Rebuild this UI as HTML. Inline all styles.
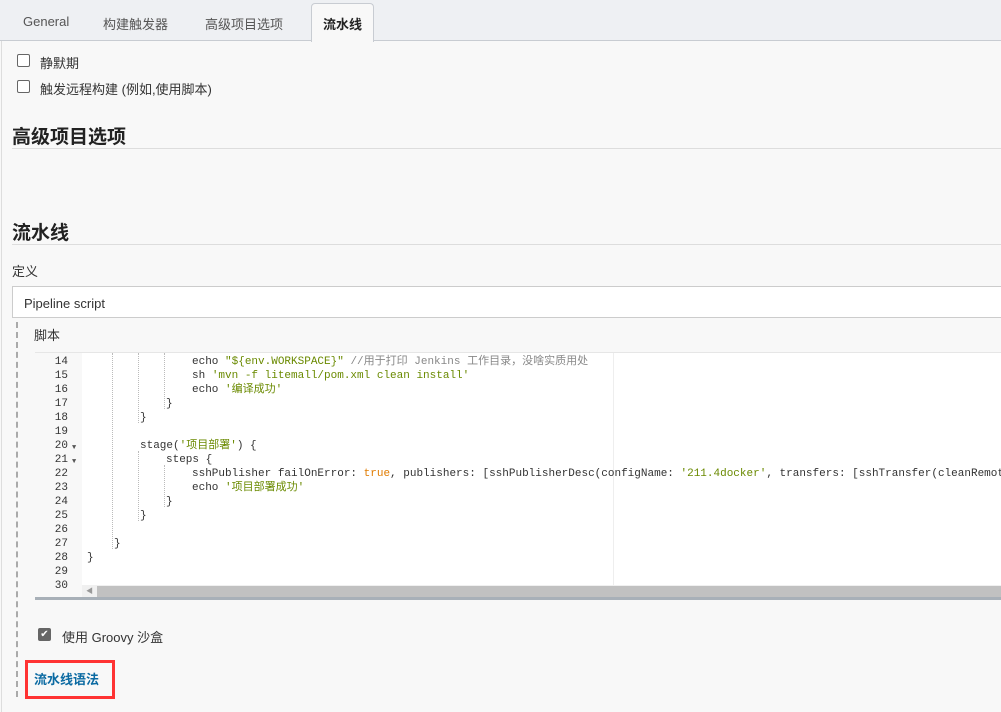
<!DOCTYPE html>
<html><head><meta charset="utf-8"><style>
*{margin:0;padding:0;box-sizing:border-box}
body{width:1001px;height:712px;overflow:hidden;background:#f8f8f8;font-family:"Liberation Sans","Noto Sans CJK SC",sans-serif;color:#333;position:relative;font-size:13px}
.abs{position:absolute;white-space:nowrap}
.tabs{position:absolute;left:0;top:0;width:1001px;height:41px;background:#eef0f3;border-bottom:1px solid #c8ccd2}
.tab{position:absolute;top:14px;font-size:13px;color:#555}
.tab.on{top:3px;left:311px;width:63px;height:39px;background:#f8f8f8;border:1px solid #c8ccd2;border-bottom:none;border-radius:4px 4px 0 0;color:#222;font-weight:bold;text-align:center;padding-top:10px}
.cb{position:absolute;width:13px;height:13px;border:1px solid #666;border-radius:2px;background:#fff}
h2{position:absolute;left:12px;font-size:19px;font-weight:bold;color:#222}
.hr{position:absolute;left:12px;right:0;height:1px;background:#ddd}
.code{position:absolute;left:35px;top:352px;width:966px;height:248px;background:#fff;border-top:1px solid #e6e6e6;overflow:hidden;font-family:"Liberation Mono","Noto Sans CJK SC",monospace;font-size:11px;line-height:14px}
.gut{position:absolute;left:0;top:0;width:47px;height:248px;background:#f8f8f8}
.ln{position:absolute;left:0;width:33px;text-align:right;color:#333;height:14px}
.fa{position:absolute;left:37px;font-size:7px;color:#555}
.cl{position:absolute;white-space:pre;color:#333;height:14px;line-height:14px;font-size:11px}
.s{color:#6a8a00}.k{color:#e07b00}.c{color:#888}
.guide{position:absolute;width:0;border-left:1px dotted #bbb}
</style></head><body>
<div class="abs" style="left:1px;top:41px;width:1px;height:671px;background:#ddd"></div>
<div class="tabs">
<span class="tab" style="left:23px">General</span>
<span class="tab" style="left:103px">构建触发器</span>
<span class="tab" style="left:205px">高级项目选项</span>
<div class="tab on">流水线</div>
</div>
<div class="cb" style="left:17px;top:54px"></div><span class="abs" style="left:40px;top:53px">静默期</span>
<div class="cb" style="left:17px;top:80px"></div><span class="abs" style="left:40px;top:79px">触发远程构建 (例如,使用脚本)</span>
<h2 style="top:122px">高级项目选项</h2><div class="hr" style="top:148px"></div>
<h2 style="top:218px">流水线</h2><div class="hr" style="top:244px"></div>
<span class="abs" style="left:12px;top:261px">定义</span>
<div class="abs" style="left:12px;top:286px;width:995px;height:32px;background:#fff;border:1px solid #ccc;padding:9px 11px;font-size:13px">Pipeline script</div>
<div class="abs" style="left:16px;top:322px;height:375px;border-left:2px dashed #aaa"></div>
<span class="abs" style="left:34px;top:325px">脚本</span>
<div class="code">
<div class="gut"></div>
<div style="position:absolute;left:578px;top:0;width:1px;height:232px;background:#eee"></div>
<div class="ln" style="top:2px">14</div><div class="ln" style="top:16px">15</div><div class="ln" style="top:30px">16</div><div class="ln" style="top:44px">17</div><div class="ln" style="top:58px">18</div><div class="ln" style="top:72px">19</div><div class="ln" style="top:86px">20</div><div class="ln" style="top:100px">21</div><div class="ln" style="top:114px">22</div><div class="ln" style="top:128px">23</div><div class="ln" style="top:142px">24</div><div class="ln" style="top:156px">25</div><div class="ln" style="top:170px">26</div><div class="ln" style="top:184px">27</div><div class="ln" style="top:198px">28</div><div class="ln" style="top:212px">29</div><div class="ln" style="top:226px">30</div>
<div class="fa" style="top:88px">▼</div><div class="fa" style="top:102px">▼</div>
<div class="guide" style="left:77px;top:0;height:196px"></div>
<div class="guide" style="left:103px;top:0;height:70px"></div>
<div class="guide" style="left:103px;top:98px;height:70px"></div>
<div class="guide" style="left:129px;top:0;height:56px"></div>
<div class="guide" style="left:129px;top:112px;height:42px"></div>
<div class="cl" style="left:157px;top:2px">echo <span class="s">"${env.WORKSPACE}"</span> <span class="c">//用于打印 Jenkins 工作目录，没啥实质用处</span></div>
<div class="cl" style="left:157px;top:16px">sh <span class="s">'mvn -f litemall/pom.xml clean install'</span></div>
<div class="cl" style="left:157px;top:30px">echo <span class="s">'编译成功'</span></div>
<div class="cl" style="left:131px;top:44px">}</div>
<div class="cl" style="left:105px;top:58px">}</div>
<div class="cl" style="left:105px;top:86px">stage(<span class="s">'项目部署'</span>) {</div>
<div class="cl" style="left:131px;top:100px">steps {</div>
<div class="cl" style="left:157px;top:114px">sshPublisher failOnError: <span class="k">true</span>, publishers: [sshPublisherDesc(configName: <span class="s">'211.4docker'</span>, transfers: [sshTransfer(cleanRemote: false</div>
<div class="cl" style="left:157px;top:128px">echo <span class="s">'项目部署成功'</span></div>
<div class="cl" style="left:131px;top:142px">}</div>
<div class="cl" style="left:105px;top:156px">}</div>
<div class="cl" style="left:79px;top:184px">}</div>
<div class="cl" style="left:52px;top:198px">}</div>
<div style="position:absolute;left:47px;top:232px;width:919px;height:12px;background:#f0f0f0"></div>
<div style="position:absolute;left:62px;top:233px;width:904px;height:11px;background:#c1c1c1"></div>
<div style="position:absolute;left:51px;top:235px;font-size:7px;color:#999;line-height:8px">◀</div>
<div style="position:absolute;left:0;top:244px;width:966px;height:4px;background:#a8b0b8"></div>
</div>
<div class="abs" style="left:38px;top:628px;width:13px;height:13px;background:#666;border-radius:2px;color:#fff;font-size:10px;line-height:13px;text-align:center">✔</div>
<span class="abs" style="left:62px;top:627px">使用 Groovy 沙盒</span>
<div class="abs" style="left:25px;top:660px;width:90px;height:39px;border:3px solid #f33"></div>
<span class="abs" style="left:34px;top:669px;color:#0b6aa2;font-weight:bold">流水线语法</span>
</body></html>
